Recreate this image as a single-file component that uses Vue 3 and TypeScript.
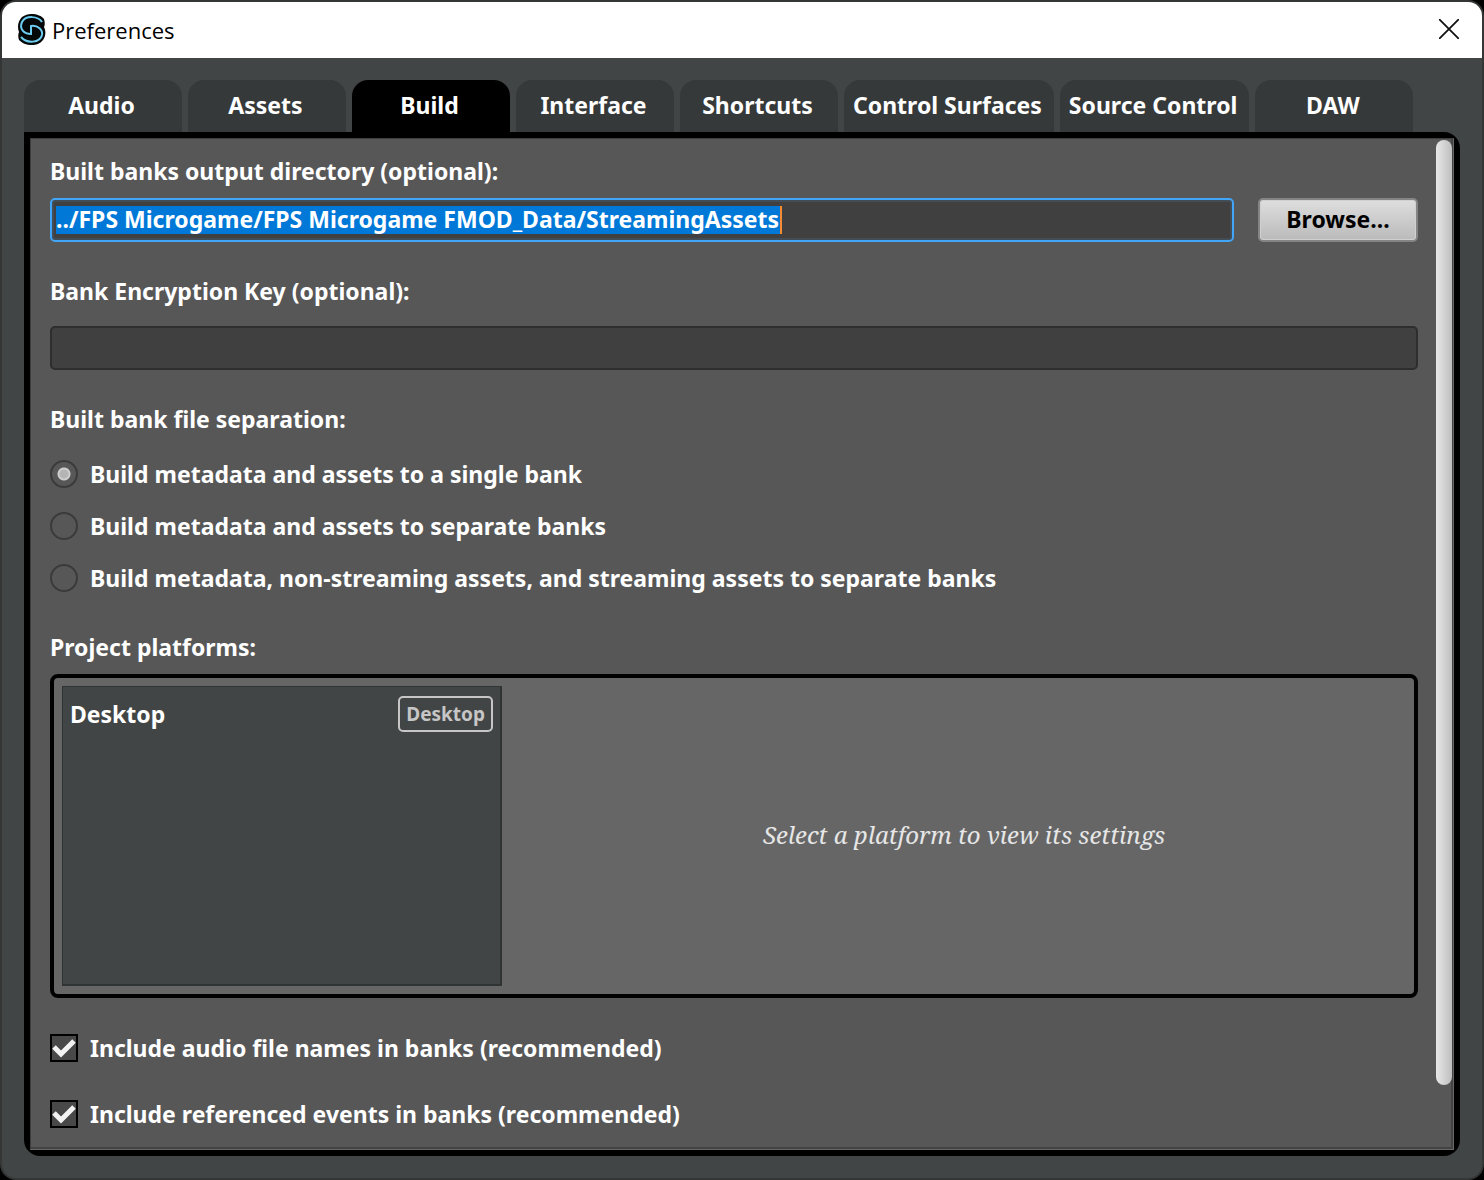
<script setup lang="ts">
import { onMounted, ref } from 'vue'

const tabs = ['Audio', 'Assets', 'Build', 'Interface', 'Shortcuts', 'Control Surfaces', 'Source Control', 'DAW']
const activeTab = ref('Build')

const outputDir = ref('../FPS Microgame/FPS Microgame FMOD_Data/StreamingAssets')
const encryptionKey = ref('')

const separationModes = [
  { id: 'single', label: 'Build metadata and assets to a single bank' },
  { id: 'separate', label: 'Build metadata and assets to separate banks' },
  { id: 'streaming', label: 'Build metadata, non-streaming assets, and streaming assets to separate banks' },
]
const separation = ref('single')

const includeNames = ref(true)
const includeEvents = ref(true)

// Width of the highlighted range in the output directory field
const dirInput = ref<HTMLInputElement | null>(null)
const selectionWidth = ref(0)

onMounted(() => {
  const el = dirInput.value
  const ctx = document.createElement('canvas').getContext('2d')
  if (!el || !ctx) return
  const style = getComputedStyle(el)
  ctx.font = `${style.fontWeight} ${style.fontSize} ${style.fontFamily}`
  selectionWidth.value = Math.ceil(ctx.measureText(outputDir.value).width)
})
</script>

<template>
  <div class="window">
    <header class="titlebar">
      <svg class="logo" viewBox="0 0 28 32" aria-hidden="true">
        <path d="M13 0C19 0 24 2 26 5C27 8 27 11 26 13C28 17 28 22 25 26C22 30 18 31 14 31C8 31 4 29 1 26C0 23 0 20 1 18C-1 13 0 7 4 3C7 1 10 0 13 0Z" fill="#050808" />
        <path d="M24 8C20 2 8 1 4 8C1 15 6 20 13 20V12C20 11 25 16 24 21C22 29 9 30 3 23" fill="none" stroke="#6ccdf0" stroke-width="2" />
      </svg>
      <h1 class="title">Preferences</h1>
      <button class="close" type="button" aria-label="Close">
        <svg viewBox="0 0 20 20" aria-hidden="true">
          <path d="M0 0L20 20M20 0L0 20" fill="none" stroke="#111" stroke-width="1.8" />
        </svg>
      </button>
    </header>

    <main class="body">
      <nav class="tabs" role="tablist">
        <button
          v-for="tab in tabs"
          :key="tab"
          type="button"
          role="tab"
          class="tab"
          :class="{ active: tab === activeTab }"
          :aria-selected="tab === activeTab"
          @click="activeTab = tab"
        >{{ tab }}</button>
      </nav>

      <section class="panel">
        <div class="pane">
          <form class="form" @submit.prevent>
            <label class="heading" for="output-dir">Built banks output directory (optional):</label>
            <div class="dir-row">
              <div class="field focused">
                <span class="selection" :style="{ width: selectionWidth + 'px' }"></span>
                <input id="output-dir" ref="dirInput" v-model="outputDir" type="text" spellcheck="false" />
              </div>
              <button class="browse" type="button">Browse...</button>
            </div>

            <label class="heading key-heading" for="encryption-key">Bank Encryption Key (optional):</label>
            <div class="field">
              <input id="encryption-key" v-model="encryptionKey" type="text" />
            </div>

            <fieldset class="modes">
              <legend class="heading">Built bank file separation:</legend>
              <label v-for="mode in separationModes" :key="mode.id" class="option">
                <input v-model="separation" class="radio" type="radio" name="separation" :value="mode.id" />
                <span>{{ mode.label }}</span>
              </label>
            </fieldset>

            <h2 class="heading platforms-heading">Project platforms:</h2>
            <div class="platforms">
              <ul class="platform-list">
                <li class="platform">
                  <span>Desktop</span>
                  <span class="tag">Desktop</span>
                </li>
              </ul>
              <p class="hint">Select a platform to view its settings</p>
            </div>

            <div class="checks">
              <label class="option">
                <span class="tick">
                  <input v-model="includeNames" type="checkbox" />
                  <svg v-if="includeNames" viewBox="0 0 28 28" aria-hidden="true"><path d="M4 13L11 20L24 7" /></svg>
                </span>
                <span>Include audio file names in banks (recommended)</span>
              </label>
              <label class="option">
                <span class="tick">
                  <input v-model="includeEvents" type="checkbox" />
                  <svg v-if="includeEvents" viewBox="0 0 28 28" aria-hidden="true"><path d="M4 13L11 20L24 7" /></svg>
                </span>
                <span>Include referenced events in banks (recommended)</span>
              </label>
            </div>
          </form>
          <div class="scrollbar"><div class="thumb"></div></div>
        </div>
      </section>
    </main>
  </div>
</template>

<style>
body {
  background: #000;
}
</style>

<style scoped>
* {
  box-sizing: border-box;
}

.window {
  display: flex;
  flex-direction: column;
  min-height: 100vh;
  border: 2px solid #343535;
  border-radius: 16px;
  overflow: hidden;
  background: #424545;
  color: #fff;
  font: 700 23px/32px "Noto Sans", "Open Sans", sans-serif;
}

button,
input {
  margin: 0;
  font: inherit;
  color: inherit;
}

.titlebar {
  display: flex;
  align-items: center;
  height: 56px;
  padding: 0 23px 0 16px;
  background: #fff;
  color: #000;
}

.logo {
  width: 28px;
  height: 32px;
}

.title {
  flex: 1;
  margin: 0 0 0 6px;
  font: 400 22px/32px "Open Sans", sans-serif;
}

.close {
  display: flex;
  padding: 0 0 2px;
  border: 0;
  background: none;
}

.close svg {
  width: 20px;
  height: 20px;
}

.body {
  flex: 1;
  display: flex;
  flex-direction: column;
  padding: 22px;
}

.tabs {
  display: flex;
  gap: 6px;
}

.tab {
  height: 52px;
  min-width: 158px;
  padding: 0 12px 2px 9px;
  border: 0;
  border-radius: 16px 16px 0 0;
  background: #363939;
  white-space: nowrap;
}

.tab.active {
  background: #000;
}

.panel {
  flex: 1;
  display: flex;
  border: 6px solid #000;
  border-radius: 0 16px 16px 16px;
  background: #000;
}

.pane {
  flex: 1;
  display: flex;
  border: 1px solid #3e3e3e;
  border-right-color: #686868;
  border-bottom-color: #686868;
  background: #575757;
  box-shadow: inset -2px -2px #434343;
}

.form {
  flex: 1;
  padding: 16px 18px 16px 19px;
}

.heading {
  display: block;
  margin: 0;
  padding: 0;
  font: inherit;
}

.dir-row {
  display: flex;
  gap: 24px;
  margin-top: 11px;
}

.field {
  position: relative;
  flex: 1;
  height: 44px;
  border: 2px solid #2e2e2e;
  border-radius: 5px;
  background: #404040;
}

.field.focused {
  border-color: #41a6f8;
  box-shadow: inset 0 0 0 2px #424d55;
}

.field input {
  position: relative;
  display: block;
  width: 100%;
  height: 40px;
  padding: 0 4px 3px;
  border: 0;
  outline: 0;
  background: none;
}

.selection {
  position: absolute;
  top: 6px;
  left: 4px;
  height: 28px;
  box-sizing: content-box;
  border-right: 2px solid #f58b32;
  background: #0078d7;
}

.browse {
  width: 160px;
  height: 44px;
  padding: 0 0 2px;
  border: 2px solid #858585;
  border-radius: 5px;
  background: linear-gradient(#dedede, #bababa);
  box-shadow: inset 0 0 0 1px #d0d0d0;
  color: #000;
}

.key-heading {
  margin: 33px 0 19px;
}

.modes {
  display: flex;
  flex-direction: column;
  gap: 20px;
  margin: 33px 0 0;
  padding: 0;
  border: 0;
}

.modes legend {
  margin-bottom: 23px;
}

.option {
  display: flex;
  align-items: center;
  gap: 12px;
}

.radio {
  appearance: none;
  width: 28px;
  height: 28px;
  border: 2px solid #3b3b3b;
  border-radius: 50%;
}

.radio:checked {
  background: radial-gradient(circle, #b4b4b4 4px, #cecece 5px, #cecece 6px, transparent 7px);
}

.platforms-heading {
  margin: 37px 0 11px;
}

.platforms {
  display: flex;
  height: 324px;
  padding: 8px;
  border: 4px solid #000;
  border-radius: 8px;
  background: #666;
}

.platform-list {
  width: 440px;
  margin: 0;
  padding: 9px 7px;
  list-style: none;
  border: 1px solid #303333;
  border-width: 1px 2px 2px 1px;
  background: #424545;
}

.platform {
  display: flex;
  align-items: center;
  justify-content: space-between;
}

.tag {
  padding: 0 6px;
  border: 2px solid #c6c6c6;
  border-radius: 5px;
  color: #c6c6c6;
  font-size: 19px;
}

.hint {
  flex: 1;
  align-self: center;
  margin: 0;
  padding: 0 0 2px 20px;
  color: #e6e6e6;
  text-align: center;
  font: italic 400 24px/32px "Noto Serif", "Liberation Serif", serif;
}

.checks {
  display: flex;
  flex-direction: column;
  gap: 34px;
  margin-top: 34px;
}

.tick {
  position: relative;
  display: flex;
}

.tick input {
  appearance: none;
  width: 28px;
  height: 28px;
  border: 2px solid #000;
  background: #484848;
}

.tick svg {
  position: absolute;
  inset: 0;
  pointer-events: none;
}

.tick path {
  fill: none;
  stroke: #f2f2f2;
  stroke-width: 5;
}

.scrollbar {
  width: 17px;
  padding: 1px 1px 4px 0;
}

.thumb {
  height: 94%;
  border-radius: 8px;
  background: linear-gradient(90deg, #e8e8e8, #bebebe);
}
</style>
